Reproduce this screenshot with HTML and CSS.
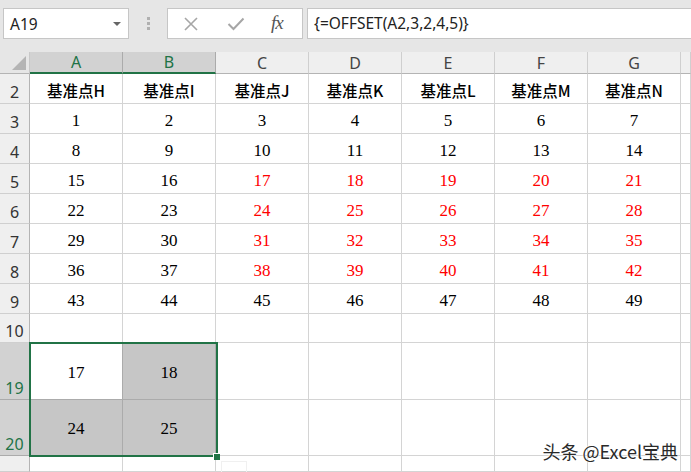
FILE: index.html
```html
<!DOCTYPE html>
<html>
<head>
<meta charset="utf-8">
<link rel="stylesheet" href="styles.css">
</head>
<body>
<div class="app">
  <div class="topbar">
    <div class="namebox"><span class="nametext">A19</span><span class="caret"></span></div>
    <div class="grip"><i></i><i></i><i></i></div>
    <div class="buttons">
      <svg class="ico" width="16" height="16" viewBox="0 0 16 16"><path d="M2 2L14 14M14 2L2 14" stroke="#a6a6a6" stroke-width="1.6" fill="none"/></svg>
      <svg class="ico" width="18" height="14" viewBox="0 0 18 14"><path d="M1.5 7L6.5 12L16.5 1.5" stroke="#a6a6a6" stroke-width="2" fill="none"/></svg>
      <span class="fx">fx</span>
    </div>
    <div class="formula">{=OFFSET(A2,3,2,4,5)}</div>
  </div>
  <div class="sheet">
    <div class="corner"><span class="tri"></span></div>
    <div class="ch sel">A</div><div class="ch sel">B</div><div class="ch">C</div><div class="ch">D</div><div class="ch">E</div><div class="ch">F</div><div class="ch">G</div><div class="ch last"></div>

    <div class="rh">2</div>
    <div class="c cn">基准点H</div><div class="c cn">基准点I</div><div class="c cn">基准点J</div><div class="c cn">基准点K</div><div class="c cn">基准点L</div><div class="c cn">基准点M</div><div class="c cn">基准点N</div><div class="c"></div>

    <div class="rh">3</div>
    <div class="c">1</div><div class="c">2</div><div class="c">3</div><div class="c">4</div><div class="c">5</div><div class="c">6</div><div class="c">7</div><div class="c"></div>

    <div class="rh">4</div>
    <div class="c">8</div><div class="c">9</div><div class="c">10</div><div class="c">11</div><div class="c">12</div><div class="c">13</div><div class="c">14</div><div class="c"></div>

    <div class="rh">5</div>
    <div class="c">15</div><div class="c">16</div><div class="c red">17</div><div class="c red">18</div><div class="c red">19</div><div class="c red">20</div><div class="c red">21</div><div class="c"></div>

    <div class="rh">6</div>
    <div class="c">22</div><div class="c">23</div><div class="c red">24</div><div class="c red">25</div><div class="c red">26</div><div class="c red">27</div><div class="c red">28</div><div class="c"></div>

    <div class="rh">7</div>
    <div class="c">29</div><div class="c">30</div><div class="c red">31</div><div class="c red">32</div><div class="c red">33</div><div class="c red">34</div><div class="c red">35</div><div class="c"></div>

    <div class="rh">8</div>
    <div class="c">36</div><div class="c">37</div><div class="c red">38</div><div class="c red">39</div><div class="c red">40</div><div class="c red">41</div><div class="c red">42</div><div class="c"></div>

    <div class="rh">9</div>
    <div class="c">43</div><div class="c">44</div><div class="c">45</div><div class="c">46</div><div class="c">47</div><div class="c">48</div><div class="c">49</div><div class="c"></div>

    <div class="rh">10</div>
    <div class="c"></div><div class="c"></div><div class="c"></div><div class="c"></div><div class="c"></div><div class="c"></div><div class="c"></div><div class="c"></div>

    <div class="rh sel">19</div>
    <div class="c s active">17</div><div class="c s grey">18</div><div class="c"></div><div class="c"></div><div class="c"></div><div class="c"></div><div class="c"></div><div class="c"></div>

    <div class="rh sel">20</div>
    <div class="c s grey">24</div><div class="c s grey">25</div><div class="c"></div><div class="c"></div><div class="c"></div><div class="c"></div><div class="c"></div><div class="c"></div>

    <div class="rh"></div>
    <div class="c"></div><div class="c"></div><div class="c"></div><div class="c"></div><div class="c"></div><div class="c"></div><div class="c"></div><div class="c"></div>

    <div class="selection"></div>
    <div class="handle"></div>
    <div class="paste"></div>
    <div class="watermark">头条 @Excel宝典</div>
  </div>
</div>
</body>
</html>
```

FILE: styles.css
```css
html, body {
  margin: 0;
  padding: 0;
  background: #ffffff;
}
.app {
  width: 691px;
  height: 472px;
  overflow: hidden;
  font-family: "Noto Sans", "Liberation Sans", sans-serif;
}
.topbar {
  height: 52px;
  background: #e6e6e6;
  display: flex;
  align-items: flex-start;
  padding: 8px 0 0 3px;
  box-sizing: border-box;
}
.namebox {
  width: 126px;
  height: 31px;
  box-sizing: border-box;
  background: #fff;
  border: 1px solid #c6c6c6;
  display: flex;
  align-items: center;
  justify-content: space-between;
  padding: 0 7px 0 6px;
}
.nametext {
  font-size: 15.5px;
  color: #222;
}
.caret {
  width: 0;
  height: 0;
  border-left: 4px solid transparent;
  border-right: 4px solid transparent;
  border-top: 4px solid #666;
}
.grip {
  width: 38px;
  height: 31px;
  display: flex;
  flex-direction: column;
  align-items: center;
  justify-content: center;
  gap: 2px;
}
.grip i {
  display: block;
  width: 3px;
  height: 3px;
  background: #b0b0b0;
}
.buttons {
  width: 136px;
  height: 31px;
  box-sizing: border-box;
  background: #fff;
  border: 1px solid #c6c6c6;
  display: flex;
  align-items: center;
  padding-left: 15px;
}
.buttons .ico:first-child {
  margin-right: 28px;
}
.buttons .ico:nth-child(2) {
  margin-right: 26px;
}
.fx {
  font-family: "Liberation Serif", serif;
  font-style: italic;
  font-size: 19px;
  color: #555;
  letter-spacing: -1px;
  margin-top: -2px;
}
.formula {
  flex: 1;
  margin-left: 4px;
  height: 31px;
  box-sizing: border-box;
  background: #fff;
  border: 1px solid #c6c6c6;
  border-right: none;
  font-size: 15.5px;
  color: #222;
  line-height: 28px;
  padding-left: 6px;
}
.sheet {
  position: relative;
  height: 420px;
  display: grid;
  grid-template-columns: 30px repeat(7, 93px) 1fr;
  grid-template-rows: 22px repeat(8, 30px) 29px 57px 56px 1fr;
  overflow: hidden;
}
.corner {
  background: #e6e6e6;
  border-right: 1px solid #c8c8c8;
  border-bottom: 1px solid #b4b4b4;
  position: relative;
}
.tri {
  position: absolute;
  right: 3px;
  bottom: 3px;
  width: 0;
  height: 0;
  border-left: 14px solid transparent;
  border-bottom: 14px solid #b4b4b4;
}
.ch {
  background: #efefef;
  border-right: 1px solid #cfcfcf;
  border-bottom: 1px solid #b4b4b4;
  color: #444;
  font-size: 16px;
  display: flex;
  align-items: center;
  justify-content: center;
  box-sizing: border-box;
}
.ch.sel {
  background: #d2d2d2;
  color: #217346;
  border-right-color: #ababab;
  border-bottom: 2px solid #217346;
}
.rh {
  background: #efefef;
  border-right: 1px solid #b4b4b4;
  border-bottom: 1px solid #cfcfcf;
  color: #333;
  font-size: 16px;
  display: flex;
  align-items: flex-end;
  justify-content: center;
  line-height: 20px;
  padding-bottom: 1px;
  box-sizing: border-box;
}
.rh.sel {
  background: #d2d2d2;
  color: #217346;
  border-bottom-color: #ababab;
}
.c {
  border-right: 1px solid #d4d4d4;
  border-bottom: 1px solid #d4d4d4;
  box-sizing: border-box;
  display: flex;
  align-items: center;
  justify-content: center;
  font-family: "Liberation Serif", serif;
  font-size: 17px;
  color: #000;
  padding-top: 5px;
}
.c.cn {
  font-family: "Noto Sans CJK SC", "Noto Sans", sans-serif;
  font-size: 15.5px;
  font-weight: 500;
  padding-top: 3px;
}
.c.red {
  color: #ff0000;
}
.c.s {
  border-color: #ababab;
  padding-top: 3px;
}
.c.grey {
  background: #c6c6c6;
}
.c.active {
  background: #fff;
}
.selection {
  position: absolute;
  left: 29px;
  top: 290px;
  width: 189px;
  height: 115px;
  box-sizing: border-box;
  border: 2px solid #217346;
  pointer-events: none;
}
.handle {
  position: absolute;
  left: 213px;
  top: 401px;
  width: 7px;
  height: 7px;
  box-sizing: border-box;
  background: #217346;
  border: 1px solid #fff;
  border-right: none;
  border-bottom: none;
}
.paste {
  position: absolute;
  left: 221px;
  top: 409px;
  width: 26px;
  height: 20px;
  box-sizing: border-box;
  border: 1px solid #f0f0f0;
  border-bottom: none;
}
.watermark {
  position: absolute;
  right: 13px;
  bottom: 12px;
  font-family: "Noto Sans CJK SC", "Noto Sans", sans-serif;
  font-size: 18px;
  color: #2a2a2a;
  line-height: 18px;
  text-shadow: 0 0 2px #fff, 0 0 2px #fff;
}
```
